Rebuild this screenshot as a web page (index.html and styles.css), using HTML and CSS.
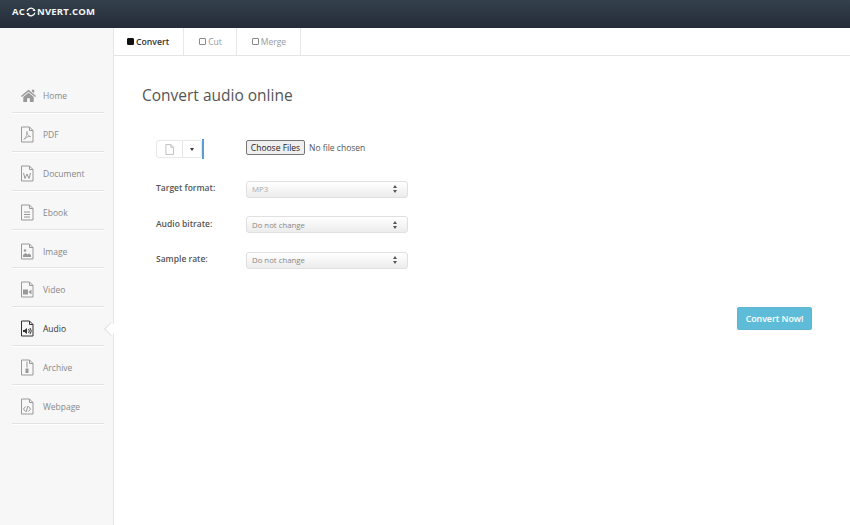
FILE: index.html
```html
<!DOCTYPE html>
<html lang="en">
<head>
    <meta charset="UTF-8">
    <title>Convert audio online</title>
    <link rel="stylesheet" href="styles.css">
</head>
<body>
    <header class="topbar">
        <a class="logo">AC<svg class="logo-icon" viewBox="0 0 14 14" width="14" height="14"><path d="M1.5 6A5.5 5.5 0 0 1 11 3.5M12.5 8A5.5 5.5 0 0 1 3 10.5" fill="none" stroke="#fff" stroke-width="1.8"/><path d="M9 5.6h4.6L11.6 2.6zM5 8.4H.4l2 3z" fill="#fff"/></svg>NVERT.COM</a>
    </header>
    <div class="page">
        <nav class="sidebar">
            <a class="nav-item">
                <svg class="nav-icon" viewBox="0 0 18 18" width="18" height="18"><path d="M1 9.5 9 3l8 6.5-1 1.2L9 5 2 10.7z" fill="currentColor"/><path d="M3.5 10.500 9 6l5.5 4.500V16h-4v-4h-3v4h-4z" fill="currentColor"/><path d="M12.5 3H15v3.5l-2.5-2z" fill="currentColor"/></svg>
                <span>Home</span>
            </a>
            <a class="nav-item">
                <svg class="nav-icon" viewBox="2 .5 17 17" width="18" height="18"><path class="doc" d="M3.5 1.5h8L15 5v11.500H3.5z"/><path class="doc" d="M11.500 1.500V5H15"/><path class="doc thin" d="M6 14c2-2 3.500-6 3-8-.5 2 1 4.500 3.500 5-2.500-.2-5 .8-6.500 3z"/></svg>
                <span>PDF</span>
            </a>
            <a class="nav-item">
                <svg class="nav-icon" viewBox="2 .5 17 17" width="18" height="18"><path class="doc" d="M3.5 1.5h8L15 5v11.500H3.5z"/><path class="doc" d="M11.500 1.500V5H15"/><path class="doc" d="M5.500 8.500 7 14l2-4.500 2 4.500 1.500-5.500"/></svg>
                <span>Document</span>
            </a>
            <a class="nav-item">
                <svg class="nav-icon" viewBox="2 .5 17 17" width="18" height="18"><path class="doc" d="M3.5 1.5h8L15 5v11.500H3.5z"/><path class="doc" d="M11.500 1.500V5H15"/><path class="doc" d="M6 8.500h6M6 11h6M6 13.500h6"/></svg>
                <span>Ebook</span>
            </a>
            <a class="nav-item">
                <svg class="nav-icon" viewBox="2 .5 17 17" width="18" height="18"><path class="doc" d="M3.5 1.5h8L15 5v11.500H3.5z"/><path class="doc" d="M11.500 1.500V5H15"/><circle cx="7" cy="8" r="1.2" fill="currentColor"/><path d="M5 14.500v-2l2.500-2 2 1.500 1.500-1 2 1.500v2z" fill="currentColor"/></svg>
                <span>Image</span>
            </a>
            <a class="nav-item">
                <svg class="nav-icon" viewBox="2 .5 17 17" width="18" height="18"><path class="doc" d="M3.5 1.5h8L15 5v11.500H3.5z"/><path class="doc" d="M11.500 1.500V5H15"/><rect x="5" y="9" width="5" height="5" fill="currentColor"/><path d="M13.500 9v5L10.500 11.500z" fill="currentColor"/></svg>
                <span>Video</span>
            </a>
            <a class="nav-item active">
                <svg class="nav-icon" viewBox="2 .5 17 17" width="18" height="18"><path class="doc" d="M3.5 1.5h8L15 5v11.500H3.5z"/><path class="doc" d="M11.500 1.500V5H15"/><path d="M5 10.500h1.500L9 8.500v6l-2.500-2H5z" fill="currentColor"/><path class="doc" d="M10.500 9.500a3 3 0 0 1 0 4M12 8.500a4.500 4.500 0 0 1 0 6"/></svg>
                <span>Audio</span>
            </a>
            <a class="nav-item">
                <svg class="nav-icon" viewBox="2 .5 17 17" width="18" height="18"><path class="doc" d="M3.5 1.5h8L15 5v11.500H3.5z"/><path class="doc" d="M11.500 1.500V5H15"/><path class="doc" d="M9 3v6"/><path d="M7.500 10h3v4.500h-3z" fill="currentColor"/></svg>
                <span>Archive</span>
            </a>
            <a class="nav-item">
                <svg class="nav-icon" viewBox="2 .5 17 17" width="18" height="18"><path class="doc" d="M3.5 1.5h8L15 5v11.500H3.5z"/><path class="doc" d="M11.500 1.500V5H15"/><path class="doc" d="M7.500 9 5.500 11.500l2 2.500M10.500 9l2 2.500-2 2.500M9.800 8.500 8.200 14.500"/></svg>
                <span>Webpage</span>
            </a>
        </nav>
        <main class="content">
            <div class="tabs">
                <a class="tab active"><i class="tab-box"></i>Convert</a>
                <a class="tab"><i class="tab-box"></i>Cut</a>
                <a class="tab"><i class="tab-box"></i>Merge</a>
            </div>
            <div class="panel">
                <h1>Convert audio online</h1>
                <form class="convert-form">
                    <div class="form-row file-row">
                        <div class="source">
                            <div class="btn-group">
                                <button type="button" class="src-btn">
                                    <svg viewBox="0 0 10 12" width="9" height="11"><path d="M1 .5h5.500L9.500 3.500v8H1z" fill="#fff" stroke="#bbb"/><path d="M6.500.5v3h3" fill="none" stroke="#bbb"/></svg>
                                </button>
                                <button type="button" class="caret-btn"><i class="caret"></i></button>
                            </div>
                            <i class="cursor"></i>
                        </div>
                        <div class="file-input">
                            <button type="button" class="choose">Choose Files</button>
                            <span>No file chosen</span>
                        </div>
                    </div>
                    <div class="form-row">
                        <label>Target format:</label>
                        <div class="select light"><span>MP3</span><i class="updown"></i></div>
                    </div>
                    <div class="form-row">
                        <label>Audio bitrate:</label>
                        <div class="select"><span>Do not change</span><i class="updown"></i></div>
                    </div>
                    <div class="form-row">
                        <label>Sample rate:</label>
                        <div class="select"><span>Do not change</span><i class="updown"></i></div>
                    </div>
                    <div class="actions">
                        <button type="button" class="convert-now">Convert Now!</button>
                    </div>
                </form>
            </div>
        </main>
    </div>
</body>
</html>
```

FILE: styles.css
```css
* {
    box-sizing: border-box;
}

html, body {
    height: 100%;
}

body {
    margin: 0;
    background: #fff;
    font-family: "Open Sans", "Liberation Sans", sans-serif;
    font-size: 8.5px;
    color: #555;
    overflow: hidden;
}

.topbar {
    height: 28px;
    background: linear-gradient(#35404d, #232c37);
    padding-left: 12px;
    display: flex;
    align-items: center;
}

.logo {
    color: #f2f4f5;
    font-size: 9.5px;
    font-weight: 700;
    letter-spacing: .2px;
    display: flex;
    align-items: center;
    margin-top: -5px;
}

.logo-icon {
    width: 10px;
    height: 10px;
    margin: 1px 1px 0 1px;
}

.page {
    display: flex;
    height: 497px;
}

.sidebar {
    width: 114px;
    flex: none;
    background: #f7f7f7;
    border-right: 1px solid #e6e6e6;
    padding: 46px 9px 0 12px;
}

.nav-item {
    height: 38.9px;
    display: flex;
    align-items: center;
    gap: 6px;
    padding: 5px 0 0 8px;
    color: #888;
    border-bottom: 1px solid #e2e2e2;
    box-shadow: 0 1px 0 #fff;
    position: relative;
}

.nav-icon {
    flex: none;
    color: #999;
    width: 17px;
    height: 17px;
}

.nav-item.active {
    color: #333;
}

.nav-item.active .nav-icon {
    color: #333;
}

.nav-item.active::after {
    content: "";
    position: absolute;
    right: -12px;
    top: 17px;
    width: 9px;
    height: 9px;
    background: #fff;
    border-left: 1px solid #e2e2e2;
    border-bottom: 1px solid #e2e2e2;
    transform: rotate(45deg);
}

.doc {
    fill: none;
    stroke: currentColor;
    stroke-width: 1;
}

.doc.thin {
    stroke-width: .8;
}

.content {
    flex: 1;
    min-width: 0;
}

.tabs {
    display: flex;
    height: 28px;
    border-bottom: 1px solid #e4e4e4;
}

.tab {
    display: flex;
    align-items: center;
    gap: 2px;
    padding: 0 14px 0 15px;
    border-right: 1px solid #e8e8e8;
    color: #999;
    font-size: 8.5px;
}

.tab.active {
    color: #333;
    font-weight: 600;
    padding-left: 13px;
    font-size: 8.7px;
}

.tab-box {
    width: 7px;
    height: 7px;
    border: 1px solid #888;
    border-radius: 1px;
}

.tab.active .tab-box {
    background: #111;
    border-color: #111;
}

.panel {
    padding: 0 38px 0 28px;
}

h1 {
    margin: 28px 0 0;
    font-size: 15.5px;
    line-height: 22px;
    font-weight: 400;
    color: #555;
}

.convert-form {
    padding-left: 14px;
    margin-top: 31px;
}

.form-row {
    display: flex;
    align-items: center;
    height: 18px;
    margin-bottom: 17.5px;
}

.form-row label {
    width: 90px;
    flex: none;
    font-weight: 600;
    color: #555;
    margin-top: -3px;
}

.file-row {
    height: 22px;
    margin-bottom: 21px;
}

.source {
    width: 90px;
    flex: none;
    display: flex;
    align-items: center;
    padding-top: 2px;
}

.btn-group {
    display: flex;
    height: 18px;
    border: 1px solid #e8e8e8;
    border-radius: 3px;
    background: #fff;
}

.src-btn, .caret-btn {
    border: 0;
    background: none;
    padding: 0;
    display: flex;
    align-items: center;
    justify-content: center;
}

.src-btn {
    width: 26px;
    border-right: 1px solid #e4e4e4;
}

.caret-btn {
    width: 18px;
}

.caret {
    border-left: 2.5px solid transparent;
    border-right: 2.5px solid transparent;
    border-top: 3px solid #333;
}

.cursor {
    width: 2px;
    height: 20px;
    background: #5a9fd0;
}

.file-input {
    display: flex;
    align-items: center;
    gap: 4px;
    color: #555;
    margin-top: -2px;
}

.choose {
    width: 59px;
    height: 15px;
    padding: 0;
    font-family: inherit;
    font-size: 8.5px;
    color: #222;
    background: #efefef;
    border: 1px solid #767676;
    border-radius: 2px;
}

.select {
    width: 162px;
    height: 17px;
    display: flex;
    align-items: center;
    justify-content: space-between;
    padding: 0 9px 0 5px;
    background: linear-gradient(#fff, #ececec);
    border: 1px solid #e0e0e0;
    border-radius: 3px;
    font-size: 7.8px;
    color: #888;
}

.select.light {
    color: #aaa;
}

.updown {
    position: relative;
    width: 5px;
    height: 8px;
}

.updown::before, .updown::after {
    content: "";
    position: absolute;
    left: 0;
    border-left: 2.5px solid transparent;
    border-right: 2.5px solid transparent;
}

.updown::before {
    top: 0;
    border-bottom: 3px solid #555;
}

.updown::after {
    bottom: 0;
    border-top: 3px solid #555;
}

.actions {
    display: flex;
    justify-content: flex-end;
    margin-top: 38px;
}

.convert-now {
    width: 75px;
    height: 23px;
    border: 1px solid #60b4d0;
    border-radius: 2px;
    background: #5fbcd9;
    color: #fff;
    font-family: inherit;
    font-size: 8.8px;
    font-weight: 600;
    padding: 0;
}
```
